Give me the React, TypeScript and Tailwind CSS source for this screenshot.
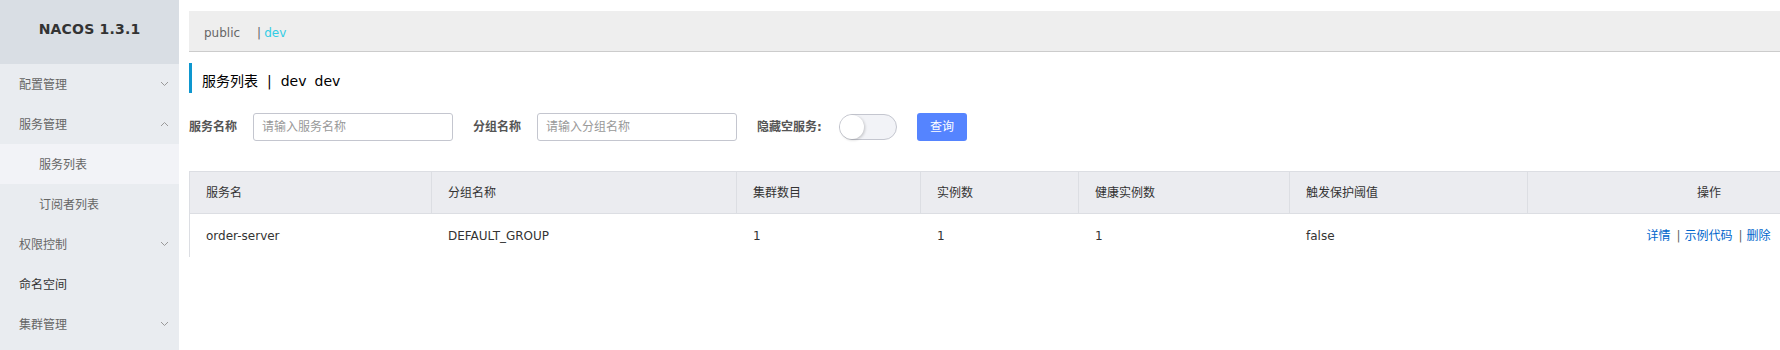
import React from "react";

const FONT = "font-['DejaVu_Sans','Noto_Sans_CJK_SC',sans-serif]";

function Chevron({ up }: { up?: boolean }) {
  return (
    <svg width="9" height="6" viewBox="0 0 9 6" className="text-[#999]">
      {up ? (
        <path d="M1 5 L4.5 1.5 L8 5" fill="none" stroke="currentColor" strokeWidth="1" />
      ) : (
        <path d="M1 1 L4.5 4.5 L8 1" fill="none" stroke="currentColor" strokeWidth="1" />
      )}
    </svg>
  );
}

function MenuItem({ label, chevron, dark }: { label: string; chevron?: "up" | "down"; dark?: boolean }) {
  return (
    <div className="h-[40px] flex items-center justify-between pl-[19px] pr-[10px] pt-[2px]">
      <span className={`text-[12px] ${dark ? "text-[#333]" : "text-[#666]"}`}>{label}</span>
      {chevron && (
        <span className="-mt-[3px]">
          <Chevron up={chevron === "up"} />
        </span>
      )}
    </div>
  );
}

function SubItem({ label, active }: { label: string; active?: boolean }) {
  return (
    <div className={`h-[40px] flex items-center pl-[39px] pt-[2px] ${active ? "bg-[#f2f3f7]" : ""}`}>
      <span className="text-[12px] text-[#666]">{label}</span>
    </div>
  );
}

const cols = [
  { title: "服务名", w: 242, v: "order-server" },
  { title: "分组名称", w: 305, v: "DEFAULT_GROUP" },
  { title: "集群数目", w: 184, v: "1" },
  { title: "实例数", w: 158, v: "1" },
  { title: "健康实例数", w: 211, v: "1" },
  { title: "触发保护阈值", w: 238, v: "false" },
];

export default function App() {
  return (
    <div className={`flex w-[1780px] h-[350px] overflow-hidden bg-white ${FONT}`}>
      <aside className="w-[179px] shrink-0 bg-[#e9ecf0] h-full">
        <div className="h-[64px] bg-[#d9dee4] flex items-center justify-center pb-[6px]">
          <span className="text-[14px] font-bold text-[#333] tracking-[0.2px]">NACOS 1.3.1</span>
        </div>
        <MenuItem label="配置管理" chevron="down" />
        <MenuItem label="服务管理" chevron="up" />
        <SubItem label="服务列表" active />
        <SubItem label="订阅者列表" />
        <MenuItem label="权限控制" chevron="down" />
        <MenuItem label="命名空间" dark />
        <MenuItem label="集群管理" chevron="down" />
      </aside>

      <main className="flex-1 min-w-0 pl-[10px] pt-[11px] overflow-hidden">
        <div className="h-[41px] bg-[#eeeeee] border-b border-[#cccccc] flex items-center pl-[15px] pt-[3px] text-[12px]">
          <span className="text-[#666]">public</span>
          <span className="text-[#666] ml-[17px] mr-[3px]">|</span>
          <span className="text-[#33cde5]">dev</span>
        </div>

        <div className="mt-[11px] h-[30px] border-l-[3px] border-[#0e97cf] pl-[10px] pt-[7px] flex items-center text-[14px] text-[#000]">
          <span>服务列表</span>
          <span className="mx-[9px]">|</span>
          <span>dev</span>
          <span className="ml-[8px]">dev</span>
        </div>

        <div className="mt-[20px] flex items-center h-[28px]">
          <span className="text-[12px] font-bold text-[#555] w-[48px] whitespace-nowrap">服务名称</span>
          <div className="ml-[16px] w-[200px] h-[28px] border border-[#c4c6cf] rounded-[3px] flex items-center pl-[8px] text-[12px] text-[#999]">
            请输入服务名称
          </div>
          <span className="ml-[20px] text-[12px] font-bold text-[#555] w-[48px] whitespace-nowrap">分组名称</span>
          <div className="ml-[16px] w-[200px] h-[28px] border border-[#c4c6cf] rounded-[3px] flex items-center pl-[8px] text-[12px] text-[#999]">
            请输入分组名称
          </div>
          <span className="ml-[20px] text-[12px] font-bold text-[#555] w-[66px] whitespace-nowrap">隐藏空服务:</span>
          <div className="ml-[16px] w-[58px] h-[26px] rounded-full border border-[#c4c6cf] bg-[#f2f3f7] relative">
            <div className="absolute left-0 top-0 w-[24px] h-[24px] rounded-full bg-white shadow-[1px_1px_3px_rgba(0,0,0,0.2)]" />
          </div>
          <button className="ml-[20px] w-[50px] h-[28px] rounded-[3px] bg-[#5584ff] text-white text-[12px]">查询</button>
        </div>

        <div className="mt-[30px] w-[1720px]">
          <div className="flex h-[43px] bg-[#ebecf0] border-t border-b border-l border-[#dcdee3]">
            {cols.map((c) => (
              <div
                key={c.title}
                style={{ width: c.w }}
                className="shrink-0 flex items-center pl-[16px] text-[12px] text-[#333] border-r border-[#dcdee3]"
              >
                {c.title}
              </div>
            ))}
            <div className="w-[362px] shrink-0 flex items-center justify-center text-[12px] text-[#333]">操作</div>
          </div>
          <div className="flex h-[43px] border-l border-[#dcdee3]">
            {cols.map((c) => (
              <div key={c.title} style={{ width: c.w }} className="shrink-0 flex items-center pl-[16px] text-[12px] text-[#333]">
                {c.v}
              </div>
            ))}
            <div className="w-[361px] shrink-0 flex items-center justify-center text-[12px]">
              <span className="text-[#0066cc]">详情</span>
              <span className="text-[#666] ml-[6px] mr-[4px]">|</span>
              <span className="text-[#0066cc]">示例代码</span>
              <span className="text-[#666] ml-[6px] mr-[4px]">|</span>
              <span className="text-[#0066cc]">删除</span>
            </div>
          </div>
        </div>
      </main>
    </div>
  );
}
